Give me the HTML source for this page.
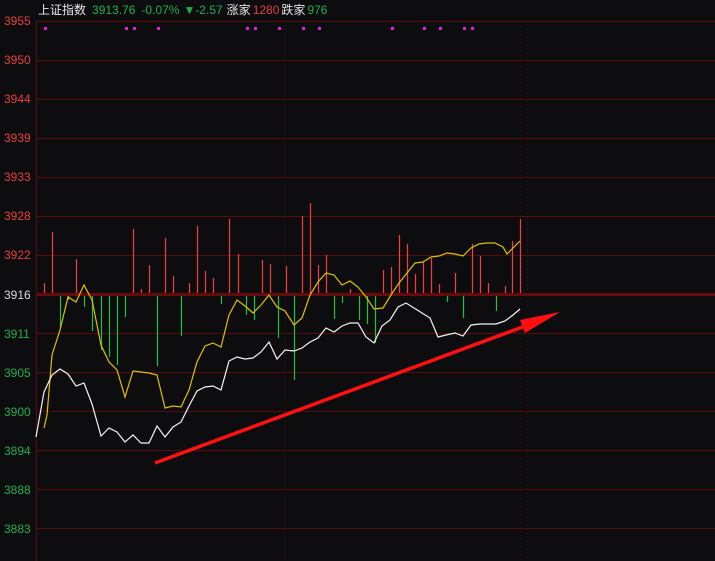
<!DOCTYPE html><html><head><meta charset="utf-8"><style>
body{margin:0;background:#0d0d10;width:715px;height:561px;overflow:hidden;font-family:"Liberation Sans","Noto Sans CJK SC",sans-serif}
</style></head><body>
<svg width="715" height="561" xmlns="http://www.w3.org/2000/svg" style="position:absolute;left:0;top:0">
<rect width="715" height="561" fill="#0d0d10"/>
<g stroke="#5a0a0a" stroke-width="1">
<line x1="36" y1="21.5" x2="715" y2="21.5"/><line x1="36" y1="60.5" x2="715" y2="60.5"/><line x1="36" y1="99.5" x2="715" y2="99.5"/><line x1="36" y1="138.5" x2="715" y2="138.5"/><line x1="36" y1="177.5" x2="715" y2="177.5"/><line x1="36" y1="216.5" x2="715" y2="216.5"/><line x1="36" y1="255.5" x2="715" y2="255.5"/><line x1="36" y1="333.5" x2="715" y2="333.5"/><line x1="36" y1="372.5" x2="715" y2="372.5"/><line x1="36" y1="411.5" x2="715" y2="411.5"/><line x1="36" y1="450.5" x2="715" y2="450.5"/><line x1="36" y1="489.5" x2="715" y2="489.5"/><line x1="36" y1="528.5" x2="715" y2="528.5"/>
<line x1="36.5" y1="21" x2="36.5" y2="561"/>
</g>
<line x1="36" y1="294.5" x2="715" y2="294.5" stroke="#6a0a0a" stroke-width="3"/>
<g stroke="#5a0a0a" stroke-dasharray="1,3"><line x1="285.5" y1="21" x2="285.5" y2="561"/><line x1="527.5" y1="21" x2="527.5" y2="561"/></g>
<g font-size="12" text-anchor="start">
<g fill="#e8403a"><text x="4" y="25">3955</text><text x="4" y="64">3950</text><text x="4" y="103">3944</text><text x="4" y="142">3939</text><text x="4" y="181">3933</text><text x="4" y="220">3928</text><text x="4" y="259">3922</text></g>
<text x="4" y="299" fill="#d8d8e8">3916</text>
<g fill="#20b04a"><text x="4" y="338">3911</text><text x="4" y="377">3905</text><text x="4" y="416">3900</text><text x="4" y="455">3894</text><text x="4" y="494">3888</text><text x="4" y="533">3883</text></g>
</g>
<text x="38" y="14" font-size="12"><tspan fill="#e8e8e8">上证指数</tspan><tspan fill="#20b04a" dx="6">3913.76</tspan><tspan fill="#20b04a" dx="6">-0.07%</tspan><tspan fill="#20b04a" dx="4">▼-2.57</tspan><tspan fill="#e8e8e8" dx="4">涨家</tspan><tspan fill="#e8403a" dx="2">1280</tspan><tspan fill="#e8e8e8" dx="2">跌家</tspan><tspan fill="#20b04a" dx="2">976</tspan></text>
<g fill="#e020e0"><rect x="44" y="27" width="3" height="3"/><rect x="125" y="27" width="3" height="3"/><rect x="133" y="27" width="3" height="3"/><rect x="157" y="27" width="3" height="3"/><rect x="246" y="27" width="3" height="3"/><rect x="254" y="27" width="3" height="3"/><rect x="278" y="27" width="3" height="3"/><rect x="302" y="27" width="3" height="3"/><rect x="318" y="27" width="3" height="3"/><rect x="391" y="27" width="3" height="3"/><rect x="423" y="27" width="3" height="3"/><rect x="439" y="27" width="3" height="3"/><rect x="463" y="27" width="3" height="3"/><rect x="471" y="27" width="3" height="3"/></g>
<g stroke="#f04040" stroke-width="1.2">
<line x1="44.5" y1="293" x2="44.5" y2="283"/><line x1="52.5" y1="293" x2="52.5" y2="232"/><line x1="76.5" y1="293" x2="76.5" y2="259"/><line x1="133.5" y1="293" x2="133.5" y2="229"/><line x1="141.5" y1="293" x2="141.5" y2="289"/><line x1="149.5" y1="293" x2="149.5" y2="265"/><line x1="165.5" y1="293" x2="165.5" y2="238"/><line x1="173.5" y1="293" x2="173.5" y2="276"/><line x1="189.5" y1="293" x2="189.5" y2="283"/><line x1="197.5" y1="293" x2="197.5" y2="226"/><line x1="205.5" y1="293" x2="205.5" y2="271"/><line x1="213.5" y1="293" x2="213.5" y2="278"/><line x1="229.5" y1="293" x2="229.5" y2="219"/><line x1="238.5" y1="293" x2="238.5" y2="254"/><line x1="262.5" y1="293" x2="262.5" y2="260"/><line x1="270.5" y1="293" x2="270.5" y2="264"/><line x1="286.5" y1="293" x2="286.5" y2="266"/><line x1="302.5" y1="293" x2="302.5" y2="216"/><line x1="310.5" y1="293" x2="310.5" y2="203"/><line x1="318.5" y1="293" x2="318.5" y2="265"/><line x1="326.5" y1="293" x2="326.5" y2="255"/><line x1="350.5" y1="293" x2="350.5" y2="289"/><line x1="383.5" y1="293" x2="383.5" y2="270"/><line x1="391.5" y1="293" x2="391.5" y2="267"/><line x1="399.5" y1="293" x2="399.5" y2="235"/><line x1="407.5" y1="293" x2="407.5" y2="244"/><line x1="415.5" y1="293" x2="415.5" y2="274"/><line x1="423.5" y1="293" x2="423.5" y2="262"/><line x1="431.5" y1="293" x2="431.5" y2="258"/><line x1="439.5" y1="293" x2="439.5" y2="284"/><line x1="455.5" y1="293" x2="455.5" y2="273"/><line x1="472.5" y1="293" x2="472.5" y2="244"/><line x1="480.5" y1="293" x2="480.5" y2="256"/><line x1="488.5" y1="293" x2="488.5" y2="283"/><line x1="505.5" y1="293" x2="505.5" y2="286"/><line x1="512.5" y1="293" x2="512.5" y2="241"/><line x1="520.5" y1="293" x2="520.5" y2="219"/>
</g>
<g stroke="#20c040" stroke-width="1.2">
<line x1="60.5" y1="296" x2="60.5" y2="328"/><line x1="68.5" y1="296" x2="68.5" y2="300"/><line x1="84.5" y1="296" x2="84.5" y2="307"/><line x1="92.5" y1="296" x2="92.5" y2="331"/><line x1="101.5" y1="296" x2="101.5" y2="350"/><line x1="109.5" y1="296" x2="109.5" y2="357"/><line x1="117.5" y1="296" x2="117.5" y2="365"/><line x1="125.5" y1="296" x2="125.5" y2="317"/><line x1="157.5" y1="296" x2="157.5" y2="366"/><line x1="181.5" y1="296" x2="181.5" y2="336"/><line x1="221.5" y1="296" x2="221.5" y2="304"/><line x1="246.5" y1="296" x2="246.5" y2="315"/><line x1="254.5" y1="296" x2="254.5" y2="320"/><line x1="278.5" y1="296" x2="278.5" y2="338"/><line x1="294.5" y1="296" x2="294.5" y2="380"/><line x1="334.5" y1="296" x2="334.5" y2="319"/><line x1="342.5" y1="296" x2="342.5" y2="303"/><line x1="359.5" y1="296" x2="359.5" y2="320"/><line x1="367.5" y1="296" x2="367.5" y2="324"/><line x1="375.5" y1="296" x2="375.5" y2="343"/><line x1="447.5" y1="296" x2="447.5" y2="302"/><line x1="463.5" y1="296" x2="463.5" y2="318"/><line x1="496.5" y1="296" x2="496.5" y2="311"/>
</g>
<polyline fill="none" stroke="#e0c000" stroke-width="1.2" points="44,428 47,415 52,355 60,330 68,297 76,302 84,285 92,300 101,345 109,362 117,370 125,397 133,371 141,372 149,373 157,375 165,408 173,406 181,407 189,390 197,362 205,346 213,343 221,347 229,315 237,300 245,306 253,313 261,305 269,295 277,307 285,311 294,325 302,318 310,295 318,282 326,273 334,275 342,285 350,281 358,287 366,297 374,309 383,308 391,295 399,283 407,273 415,263 423,262 431,257 439,256 447,253 455,254 463,256 471,248 479,244 487,243 495,243 503,247 507,254 514,247 520,241"/>
<polyline fill="none" stroke="#f4f4f4" stroke-width="1.2" points="36,437 44,392 52,375 60,369 68,374 76,386 84,383 92,404 101,436 109,428 117,432 125,442 133,435 141,443 149,443 157,426 165,437 173,427 181,422 189,406 197,391 205,387 213,386 221,390 229,361 237,357 245,359 253,358 261,352 269,342 277,359 285,350 294,351 302,348 310,342 318,338 326,328 334,332 342,326 350,323 358,323 366,337 374,343 382,326 390,320 398,307 406,303 414,308 422,313 430,318 438,337 446,335 455,333 463,336 471,325 480,324 496,324 505,321 513,315 520,309"/>
<line x1="155" y1="463" x2="528" y2="325" stroke="#ff1010" stroke-width="3.5"/>
<polygon points="520,320 560,312 525,333" fill="#ff1010"/>
</svg>
</body></html>
